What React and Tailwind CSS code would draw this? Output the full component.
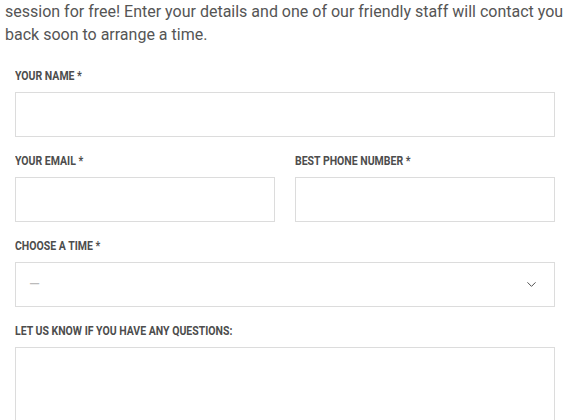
import { ChevronDown } from "lucide-react";

const label =
  "block w-max origin-left scale-x-[0.84] whitespace-nowrap text-[12.5px] leading-4 font-bold uppercase text-[#4d4d4d]";
const box = "block w-full h-[45px] border border-[#dcdcdc] bg-white";

export default function App() {
  return (
    <div className="w-[579px] h-[420px] overflow-hidden bg-white font-['Roboto',sans-serif]">
      {/* intro copy */}
      <p className="pl-[5px] pr-2 text-[16px] leading-[23px] text-[#555]">
        session for free! Enter your details and one of our friendly staff will contact you
        back soon to arrange a time.
      </p>

      {/* form */}
      <form className="mt-[22px] w-[540px] ml-[15px] flex flex-col gap-4">
        <div>
          <label className={label}>Your Name *</label>
          <input className={`${box} mt-2`} />
        </div>

        <div className="grid grid-cols-2 gap-5">
          <div>
            <label className={label}>Your Email *</label>
            <input className={`${box} mt-2`} />
          </div>
          <div>
            <label className={label}>Best Phone Number *</label>
            <input className={`${box} mt-2`} />
          </div>
        </div>

        <div>
          <label className={label}>Choose a Time *</label>
          <div className={`${box} mt-2 flex items-center justify-between pl-[13px] pr-[15px]`}>
            <span className="text-[14px] text-[#bbb]">—</span>
            <ChevronDown size={15} strokeWidth={1.5} className="text-[#444]" />
          </div>
        </div>

        <div>
          <label className={label}>Let us know if you have any questions:</label>
          <textarea className="block w-full h-[120px] mt-2 border border-[#dcdcdc] bg-white resize-none" />
        </div>
      </form>
    </div>
  );
}
